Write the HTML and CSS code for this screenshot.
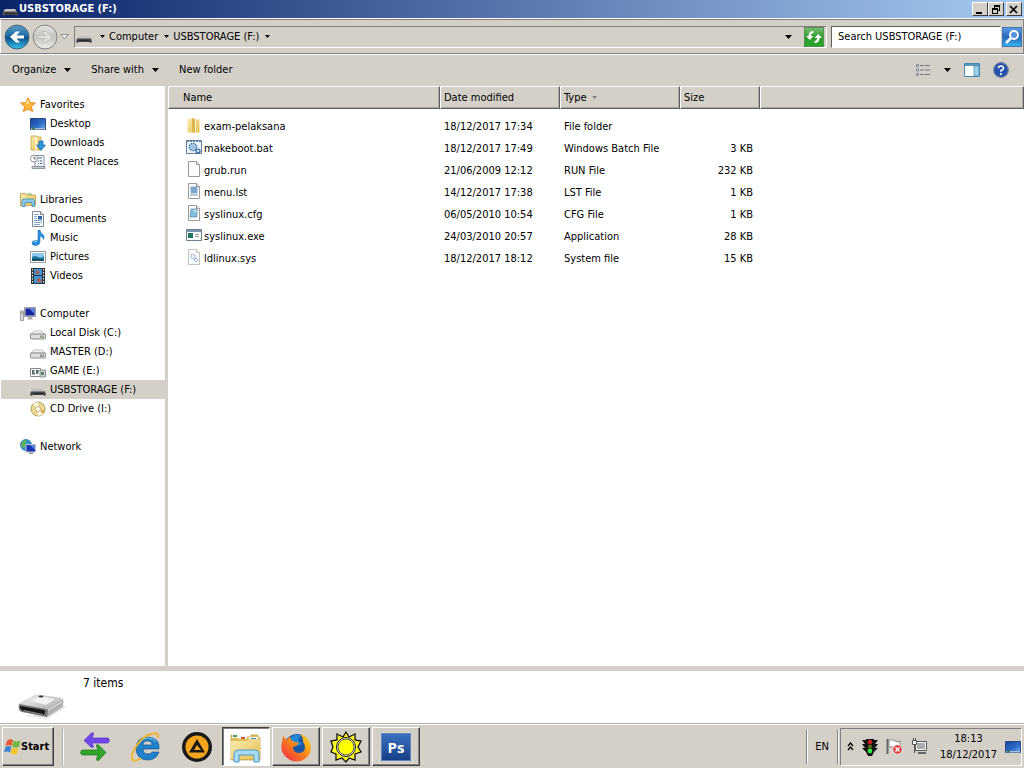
FILE: index.html
```
<!DOCTYPE html>
<html lang="en">
<head>
    <meta charset="utf-8">
    <title>USBSTORAGE (F:)</title>
    <link rel="stylesheet" href="styles.css">
</head>
<body>
    <!-- Icon sprite -->
    <svg class="sprite" aria-hidden="true">
        <defs>
            <linearGradient id="gBlue" x1="0" y1="0" x2="0" y2="1">
                <stop offset="0" stop-color="#5f9fc4"/><stop offset=".48" stop-color="#1769a5"/><stop offset=".52" stop-color="#0c4c87"/><stop offset="1" stop-color="#35c4f0"/>
            </linearGradient>
            <linearGradient id="gGrey" x1="0" y1="0" x2="0" y2="1">
                <stop offset="0" stop-color="#e6e4e0"/><stop offset=".5" stop-color="#c4c2bd"/><stop offset="1" stop-color="#eeece8"/>
            </linearGradient>
            <linearGradient id="gFolder" x1="0" y1="0" x2="1" y2="1">
                <stop offset="0" stop-color="#fbeeb0"/><stop offset="1" stop-color="#e3bd52"/>
            </linearGradient>
            <linearGradient id="gScreen" x1="0" y1="0" x2="1" y2="1">
                <stop offset="0" stop-color="#16439c"/><stop offset=".6" stop-color="#2e6fca"/><stop offset="1" stop-color="#7db5ee"/>
            </linearGradient>
            <linearGradient id="gDrive" x1="0" y1="0" x2="1" y2="1">
                <stop offset="0" stop-color="#fafafa"/><stop offset="1" stop-color="#a8a8a8"/>
            </linearGradient>
            <linearGradient id="gFox" x1="1" y1="0" x2="0" y2="1">
                <stop offset="0" stop-color="#ffe226"/><stop offset=".45" stop-color="#ff8a16"/><stop offset="1" stop-color="#e8204e"/>
            </linearGradient>
        </defs>
        <symbol id="usb" viewBox="0 0 16 16">
            <path d="M3 7h10l2 3H1z" fill="#c2c0bf"/>
            <path d="M1 9.500h14l1 3-1 1.500-2-1H3l-2 1-1-1.500z" fill="#47464b"/>
            <path d="M3 11h10v1H3z" fill="#29282c"/>
        </symbol>
        <symbol id="drive" viewBox="0 0 16 16">
            <path d="M4 6h8l3 3H1z" fill="#f4f4f4" stroke="#aaa" stroke-width=".7"/>
            <path d="M1 9h14q.6 0 .6 1v3q0 1-1 1H1.400q-1 0-1-1v-3q0-1 .6-1z" fill="#dcdcdc" stroke="#777" stroke-width=".8"/>
            <path d="M10 10.500h4v2.500h-4z" fill="#999"/><path d="M12 11h1v1h-1z" fill="#7fe05a"/>
        </symbol>
        <symbol id="game" viewBox="0 0 16 16">
            <path d="M.5 5.500h10v8H.5z" fill="#fff" stroke="#888"/>
            <path d="M2 7h3l-1.500 2.500H5v2H2zM6 7h3l-1 4H6z" fill="#566c6c"/>
            <path d="M10 7h5.500v7H10z" fill="#d4d8d4" stroke="#777" stroke-width=".8"/><path d="M11 9h3v3h-3z" fill="#55886c"/>
        </symbol>
        <symbol id="cd" viewBox="0 0 16 16">
            <circle cx="8" cy="8" r="7" fill="#ead996" stroke="#b49d5c"/>
            <path d="M8 8L3 2.500 8 1zM8 8l5.500 5L8 15z" fill="#fdf9e2"/>
            <circle cx="8" cy="8" r="2.500" fill="#fff" stroke="#b9a566" stroke-width=".8"/>
            <path d="M11 9h3v3h-3z" fill="#c99f2e" opacity=".7"/>
        </symbol>
        <symbol id="star" viewBox="0 0 16 16">
            <path d="M8 .7l2.100 4.900 5.300.4-4 3.500 1.300 5.300L8 12l-4.700 2.800 1.300-5.300-4-3.500 5.300-.4z" fill="#fdb63a" stroke="#e2851c" stroke-width=".9"/>
            <path d="M8 3l1 3.500H5.500z" fill="#fff0b4"/>
        </symbol>
        <symbol id="desktop" viewBox="0 0 16 16">
            <path d="M.5 2.500h15v11H.5z" fill="url(#gScreen)" stroke="#2b4b85"/>
            <path d="M1 12h14v1.500H1z" fill="#a9c0da"/><path d="M2 11.500h3v2H2z" fill="#3c7d4c"/>
        </symbol>
        <symbol id="downloads" viewBox="0 0 16 16">
            <path d="M1 1h6l1 1h3v13H1z" fill="url(#gFolder)" stroke="#c9a548" stroke-width=".8"/>
            <path d="M5 2h2v13H5z" fill="#fff4c5"/>
            <path d="M9 6h4v4h2.500L11 15.500 6.500 10H9z" fill="#2a97dc" stroke="#1267a6" stroke-width=".7"/>
        </symbol>
        <symbol id="recent" viewBox="0 0 16 16">
            <path d="M5 1.500h9v11H5z" fill="#f3f6fb" stroke="#7e8794" stroke-width=".9"/>
            <path d="M2 12.500h13v2H2z" fill="#c4cbd5" stroke="#7e8794" stroke-width=".8"/>
            <path d="M8 4h4M8 7h1m1 0h2M8 9.500h1m1 0h2" stroke="#4b6290"/>
            <circle cx="4" cy="4.500" r="3.500" fill="#fff" stroke="#7e8794" stroke-width=".9"/>
            <path d="M4 2.500v2.300h2" fill="none" stroke="#444" stroke-width=".8"/>
        </symbol>
        <symbol id="libraries" viewBox="0 0 16 16">
            <path d="M.5 1.500h5l1 1.500h9v10.500H.5z" fill="url(#gFolder)" stroke="#bb9c42" stroke-width=".8"/>
            <path d="M7 2h5" stroke="#75b36b"/>
            <path d="M2 14.500V9q0-2 2-2h8.500q2 0 2 2v5.500H12v-4H5v4z" fill="#8bcbee" stroke="#3b8dbd" stroke-width=".8"/>
        </symbol>
        <symbol id="documents" viewBox="0 0 16 16">
            <path d="M2.500.5h8l3 3v12h-11z" fill="#fff" stroke="#7a8794"/>
            <path d="M10.500.5v3h3" fill="#dbe4ee" stroke="#7a8794"/>
            <path d="M4 3.500h5M4 5.500h3m-3 2h3m-3 2h8m-8 2h8m-8 2h6" stroke="#83a7cb"/><path d="M8 5h4v3.500H8z" fill="#2f63a4"/>
        </symbol>
        <symbol id="music" viewBox="0 0 16 16">
            <path d="M8 0h2q.4 3 3 4.500 2 2 .5 5-.3-3-3.500-3.500V12q-.4 3.300-4 3.500-4 0-4-2.600Q2.300 10 8 10.500z" fill="#2890e0" stroke="#1566ae" stroke-width=".5"/>
            <path d="M4 12q1-1 3-.7" stroke="#a8ddff" fill="none"/>
        </symbol>
        <symbol id="pictures" viewBox="0 0 16 16">
            <path d="M.5 2.500h15v11H.5z" fill="#fff" stroke="#999"/>
            <path d="M2 4h12v8H2z" fill="#8bcbf0"/><path d="M2 8q3-2 6 0t6-1v5H2z" fill="#207ba0"/><path d="M2 10q4-1 12 .5V12H2z" fill="#174f67"/>
        </symbol>
        <symbol id="videos" viewBox="0 0 16 16">
            <path d="M1 0h14v16H1z" fill="#303338"/><path d="M4 1h8v6H4zm0 7h8v7H4z" fill="#3f96da"/>
            <path d="M5 4l3-2 2 3-3 1zm2 7l3-1 2 4H7z" fill="#b45d44"/>
            <path d="M2.500 1v15M13.500 1v15" stroke="#eee" stroke-dasharray="1.500 1.500"/>
        </symbol>
        <symbol id="computer" viewBox="0 0 16 16">
            <path d="M.5 5h3v9.500h-3z" fill="#dcdcdc" stroke="#888" stroke-width=".8"/><path d="M1 7h2" stroke="#55a04c"/>
            <path d="M4.500 1.500h11v9h-11z" fill="#cfcfcf" stroke="#888" stroke-width=".8"/>
            <path d="M5.500 2.500h9v7h-9z" fill="#15259f"/><path d="M9 2.500h5.500V8z" fill="#587fe3"/>
            <path d="M8.500 10.500h3l1.500 3H7z" fill="#aaa"/>
        </symbol>
        <symbol id="network" viewBox="0 0 16 16">
            <circle cx="6" cy="6" r="5.500" fill="#2e94d8" stroke="#1766a1" stroke-width=".7"/>
            <path d="M2 3q3-3 5-1L5 5l1 2-3 2-2-2z" fill="#62b44e"/>
            <path d="M6 5.500h9.500V13H6z" fill="#1b35b5" stroke="#bfc4cd"/><path d="M10 6h5v5z" fill="#5b83e4"/><path d="M9 13.500h4V15H9z" fill="#999"/>
        </symbol>
        <symbol id="folder" viewBox="0 0 16 16">
            <path d="M1.500 1.500h6l1 1h5v13h-12z" fill="url(#gFolder)"/><path d="M6 1l3 1v14l-3-1z" fill="#dcb649"/><path d="M9 3h1v12H9z" fill="#fff6cf"/>
        </symbol>
        <symbol id="batch" viewBox="0 0 16 16">
            <path d="M.5 1.500h15v13H.5z" fill="#eff6fc" stroke="#66809b"/><path d="M1 2.500h14" stroke="#4e7ba8" stroke-dasharray="2 1"/>
            <circle cx="7" cy="8" r="3.500" fill="#cbe2f5" stroke="#3b78b4" stroke-width="1.600" stroke-dasharray="1.600 .7"/><circle cx="7" cy="8" r="1.200" fill="#fff" stroke="#3b78b4" stroke-width=".7"/>
            <circle cx="12" cy="12" r="2" fill="#cbe2f5" stroke="#2f68a3" stroke-width="1.200"/>
        </symbol>
        <symbol id="blank" viewBox="0 0 16 16">
            <path d="M2.500.5h8l3 3v12h-11z" fill="#fcfcfc" stroke="#9a9a9a"/><path d="M10.500.5v3h3" fill="#e8e8e8" stroke="#9a9a9a"/>
        </symbol>
        <symbol id="text" viewBox="0 0 16 16">
            <use href="#blank"/><path d="M5 4h6v6H5z" fill="#8dbce5" stroke="#5f86b6" stroke-width=".7"/><path d="M6 6h4M6 8h4M4 12h8" stroke="#5f7ba5" stroke-width=".8"/>
        </symbol>
        <symbol id="config" viewBox="0 0 16 16">
            <use href="#blank"/><path d="M5 4h6v8H4z" fill="#81bfdc" stroke="#5a91ae" stroke-width=".7"/><path d="M7 5h3v3z" fill="#d6f2f6"/>
        </symbol>
        <symbol id="app" viewBox="0 0 16 16">
            <path d="M.5 2.500h15v11H.5z" fill="#fff" stroke="#6b7f90"/><path d="M1 3h14v2H1z" fill="#7c98b0"/>
            <path d="M2 6h5v5H2z" fill="#247465"/><path d="M9 7.500h4m-4 2h4" stroke="#999"/>
        </symbol>
        <symbol id="sys" viewBox="0 0 16 16">
            <g opacity=".6"><use href="#blank"/><circle cx="7" cy="7.500" r="2.300" fill="#e5eff8" stroke="#6792b8" stroke-width="1.300" stroke-dasharray="1.400 .5"/><circle cx="10" cy="11" r="1.600" fill="#e5eff8" stroke="#6792b8"/></g>
        </symbol>
        <symbol id="caret" viewBox="0 0 7 4"><path d="M0 0h7L3.500 4z" fill="currentColor"/></symbol>
    </svg>

    <header class="titlebar">
        <svg class="icon"><use href="#usb"/></svg>
        <h1>USBSTORAGE (F:)</h1>
        <div class="window-buttons">
            <button aria-label="Minimize"><svg width="10" height="9"><path d="M1 7h6v2H1z"/></svg></button>
            <button aria-label="Restore"><svg width="10" height="9"><path d="M3 0h6v6H7V5h1V2H4v1H3zM1 3h6v6H1zm1 2v3h4V5z" fill-rule="evenodd"/></svg></button>
            <button class="close" aria-label="Close"><svg width="10" height="9"><path d="M1 1l7 7M8 1L1 8" stroke="#000" stroke-width="1.700"/></svg></button>
        </div>
    </header>

    <nav class="navbar" aria-label="Address">
        <div class="history">
            <button aria-label="Back">
                <svg width="26" height="26" viewBox="0 0 26 26"><circle cx="13" cy="13" r="12" fill="url(#gBlue)" stroke="#48637b"/><path d="M20 11.500h-7.500l3.500-4h-4L6 13l6 5.500h4l-3.500-4H20z" fill="#fff"/></svg>
            </button>
            <button aria-label="Forward">
                <svg width="26" height="26" viewBox="0 0 26 26"><circle cx="13" cy="13" r="12" fill="url(#gGrey)" stroke="#85837f"/><path d="M6 11.500h7.500l-3.500-4h4l6 5.500-6 5.500h-4l3.500-4H6z" fill="#deddd9" stroke="#bbb9b4" stroke-width=".6"/></svg>
            </button>
            <button aria-label="Recent pages"><svg width="9" height="6"><path d="M.7.5h7.600L4.500 5z" fill="#eee" stroke="#777" stroke-width=".8"/></svg></button>
        </div>
        <div class="address">
            <svg class="icon"><use href="#usb"/></svg>
            <button class="crumb" aria-label="Locations"><svg class="caret small"><use href="#caret"/></svg></button>
            <button class="crumb">Computer <svg class="caret small"><use href="#caret"/></svg></button>
            <button class="crumb">USBSTORAGE (F:) <svg class="caret small"><use href="#caret"/></svg></button>
            <button class="previous" aria-label="Previous locations"><svg class="caret"><use href="#caret"/></svg></button>
            <button class="refresh" aria-label="Refresh"><svg width="18" height="18" viewBox="0 0 18 18"><path d="M8.500 3v2Q6 5 6 8h2.500l-3.700 4L1 8h2.500q0-5 5-5zM9.500 15v-2q2.500 0 2.500-3H9.500l3.700-4L17 10h-2.500q0 5-5 5z" fill="#fff"/></svg></button>
        </div>
        <form class="search">
            <input type="text" aria-label="Search" value="Search USBSTORAGE (F:)">
            <button type="button" aria-label="Search"><svg width="18" height="18" viewBox="0 0 18 18"><circle cx="11" cy="7" r="4" fill="#5591dd" stroke="#fff" stroke-width="2"/><path d="M8 10l-5 5" stroke="#fff" stroke-width="2.500"/></svg></button>
        </form>
    </nav>

    <div class="toolbar">
        <button>Organize <svg class="caret"><use href="#caret"/></svg></button>
        <button>Share with <svg class="caret"><use href="#caret"/></svg></button>
        <button>New folder</button>
        <div class="view-tools">
            <button class="view" aria-label="Change view">
                <svg width="16" height="14" viewBox="0 0 16 14"><path d="M1.500 1.500h2v2h-2zm0 4.500h2v2h-2zm0 4.500h2v2h-2z" fill="#fff" stroke="#73839b"/><path d="M5 2.500h4m1 0h5M5 7h4m1 0h5M5 11.500h4m1 0h5" stroke="#74767c"/></svg>
                <svg class="caret"><use href="#caret"/></svg>
            </button>
            <button aria-label="Preview pane"><svg width="16" height="14"><path d="M.5.5h15v13H.5z" fill="#fff" stroke="#4887ad"/><path d="M1 1h14v2H1z" fill="#5999bd"/><path d="M10 3h5v10h-5z" fill="#9bd2e8" stroke="#4887ad" stroke-width=".7"/></svg></button>
            <button aria-label="Help"><svg width="16" height="16"><circle cx="8" cy="8" r="7.300" fill="#254fae" stroke="#6f7f9e" stroke-width="1.300"/><path d="M5.500 6.200Q5.500 4 8 4t2.500 2.200Q10.500 7.500 8 8.500v1.300" fill="none" stroke="#fff" stroke-width="1.700"/><circle cx="8" cy="12" r="1.100" fill="#fff"/></svg></button>
        </div>
    </div>

    <main class="explorer">
        <nav class="sidebar" aria-label="Folders">
            <ul>
                <li><a href="#"><svg class="icon"><use href="#star"/></svg>Favorites</a>
                    <ul>
                        <li><a href="#"><svg class="icon"><use href="#desktop"/></svg>Desktop</a></li>
                        <li><a href="#"><svg class="icon"><use href="#downloads"/></svg>Downloads</a></li>
                        <li><a href="#"><svg class="icon"><use href="#recent"/></svg>Recent Places</a></li>
                    </ul>
                </li>
                <li><a href="#"><svg class="icon"><use href="#libraries"/></svg>Libraries</a>
                    <ul>
                        <li><a href="#"><svg class="icon"><use href="#documents"/></svg>Documents</a></li>
                        <li><a href="#"><svg class="icon"><use href="#music"/></svg>Music</a></li>
                        <li><a href="#"><svg class="icon"><use href="#pictures"/></svg>Pictures</a></li>
                        <li><a href="#"><svg class="icon"><use href="#videos"/></svg>Videos</a></li>
                    </ul>
                </li>
                <li><a href="#"><svg class="icon"><use href="#computer"/></svg>Computer</a>
                    <ul>
                        <li><a href="#"><svg class="icon"><use href="#drive"/></svg>Local Disk (C:)</a></li>
                        <li><a href="#"><svg class="icon"><use href="#drive"/></svg>MASTER (D:)</a></li>
                        <li><a href="#"><svg class="icon"><use href="#game"/></svg>GAME (E:)</a></li>
                        <li><a href="#" class="selected"><svg class="icon"><use href="#usb"/></svg>USBSTORAGE (F:)</a></li>
                        <li><a href="#"><svg class="icon"><use href="#cd"/></svg>CD Drive (I:)</a></li>
                    </ul>
                </li>
                <li><a href="#"><svg class="icon"><use href="#network"/></svg>Network</a></li>
            </ul>
        </nav>

        <section class="files">
            <table>
                <colgroup>
                    <col class="col-name"><col class="col-date"><col class="col-type"><col class="col-size"><col>
                </colgroup>
                <thead>
                    <tr><th>Name</th><th>Date modified</th><th>Type <svg class="caret sort"><use href="#caret"/></svg></th><th>Size</th><th></th></tr>
                </thead>
                <tbody>
                    <tr><td><svg class="icon"><use href="#folder"/></svg>exam-pelaksana</td><td>18/12/2017 17:34</td><td>File folder</td><td></td><td></td></tr>
                    <tr><td><svg class="icon"><use href="#batch"/></svg>makeboot.bat</td><td>18/12/2017 17:49</td><td>Windows Batch File</td><td>3 KB</td><td></td></tr>
                    <tr><td><svg class="icon"><use href="#blank"/></svg>grub.run</td><td>21/06/2009 12:12</td><td>RUN File</td><td>232 KB</td><td></td></tr>
                    <tr><td><svg class="icon"><use href="#text"/></svg>menu.lst</td><td>14/12/2017 17:38</td><td>LST File</td><td>1 KB</td><td></td></tr>
                    <tr><td><svg class="icon"><use href="#config"/></svg>syslinux.cfg</td><td>06/05/2010 10:54</td><td>CFG File</td><td>1 KB</td><td></td></tr>
                    <tr><td><svg class="icon"><use href="#app"/></svg>syslinux.exe</td><td>24/03/2010 20:57</td><td>Application</td><td>28 KB</td><td></td></tr>
                    <tr><td><svg class="icon"><use href="#sys"/></svg>ldlinux.sys</td><td>18/12/2017 18:12</td><td>System file</td><td>15 KB</td><td></td></tr>
                </tbody>
            </table>
        </section>
    </main>

    <section class="details">
        <svg width="50" height="28" viewBox="0 0 50 28">
            <path d="M6 22l24 4 19-12-3-2-16 10z" fill="#e6e6e6"/>
            <path d="M2 11L17 3q2-1 4-1l22 3q4 1 3 3L30 17z" fill="url(#gDrive)" stroke="#bbb" stroke-width=".6"/>
            <path d="M15 8l8-4 15 2-9 6z" fill="#fafafa" opacity=".8"/><ellipse cx="24" cy="3.500" rx="2.500" ry="1" fill="#333"/>
            <path d="M28 17l17-10q1.500 0 1.500 2l-1 5L30 24z" fill="#b0b0b0"/><path d="M31 17l14-8" stroke="#eee"/>
            <path d="M2 11l27 5q2 0 2 2l-1 6L5 19q-3-1-3.500-4z" fill="#777"/>
            <path d="M3 13l24 4q1 0 1 2l-1 3L6 18q-2-1-3-3z" fill="#151515"/><path d="M7 17l19 4v1L6 18z" fill="#888"/>
        </svg>
        <p>7 items</p>
    </section>

    <footer class="taskbar">
        <button class="start">
            <svg width="17" height="17" viewBox="0 0 17 17"><path d="M3 3q3-3 6-1L7.500 8Q5 6 1.500 8z" fill="#e9542b"/><path d="M9.500 2.500q3 2 7 0L15 9Q11 10.500 8 8.500z" fill="#72b744"/><path d="M1.500 9q3-2 6 0L6 14.500q-3-2-6 0z" fill="#3d83d4"/><path d="M8 9.500q3 2 6.500.5L13 16q-3 1.500-6.500-.8z" fill="#f6c52d"/></svg>
            Start
        </button>
        <div class="quick-launch">
            <button aria-label="Transfer">
                <svg width="32" height="32" viewBox="0 0 32 32"><path d="M5 9.500L13 1.500q2 0 1.500 2L13 7h16q3 2.500 0 5H13l1.500 3.500q-.5 1.500-2 1z" fill="#7048ee" stroke="#5631c0" stroke-width=".7"/><path d="M27 21.500l-8-8q-2 0-1.500 2L19 19H3q-3 2.500 0 5h16l-1.500 4q0 2 2 1.500z" fill="#33a52c" stroke="#22741d" stroke-width=".7"/></svg>
            </button>
            <button aria-label="Internet Explorer">
                <svg width="32" height="32" viewBox="0 0 32 32"><path d="M29 18H13q0 5 5 5 3 0 4.500-2H29q-3 8-11 8Q7 29 6 18 6 6 18 6q12 1 11 12zM13 14h9q0-4-4.500-4T13 14z" fill="#2182ca" stroke="#125596" stroke-width=".7" fill-rule="evenodd"/><path d="M9 12q3-5 9-5 5 0 8 4" fill="none" stroke="#8bcff5"/><path d="M28 7q1-6-5-4.500Q14 4 7 14-1 26 3 29q2 2 8-2" fill="none" stroke="#efb62d" stroke-width="2"/></svg>
            </button>
            <button aria-label="AIMP">
                <svg width="32" height="32" viewBox="0 0 32 32"><circle cx="16" cy="16" r="15" fill="#1b1a1a"/><circle cx="16" cy="16" r="11.500" fill="#f4a71d"/><path d="M16 8l8 13.500H8zM16 14l-3 5h7z" fill="#1b1a1a" fill-rule="evenodd"/></svg>
            </button>
        </div>
        <div class="tasks">
            <button class="active" aria-label="Windows Explorer">
                <svg width="34" height="34" viewBox="0 0 34 34"><path d="M2 5h6l2 2h12V5h7v3h2v22H2z" fill="#e1bd5b" stroke="#b8953c" stroke-width=".7"/><path d="M3 4h7v4H3zM10 6h8v3h-8zM20 7h9v4h-9z" fill="#fff"/><path d="M4 5h4v2H4z" fill="#45a34a"/><path d="M12 7h4v2h-4z" fill="#d95237"/><path d="M22 8h5v2h-5z" fill="#3c87c7"/><path d="M2 11h16l2-2h11v20H2z" fill="url(#gFolder)"/><path d="M5 32V24q0-4 4-4h17q4 0 4 4v8h-5v-7H10v7z" fill="#a8daf3" stroke="#4d9fca"/></svg>
            </button>
            <button aria-label="Firefox">
                <svg width="32" height="32" viewBox="0 0 32 32"><circle cx="17" cy="16" r="13" fill="#1957a5"/><path d="M10 8q4-6 11-4l-3 5 4 4-5 2-4-3z" fill="#2389d7"/><path d="M3 5l4 4 3-4q0 5 5 6l4 1-3 3-3 1q0 5 5 6 7 0 7-6 0-3-2-5 1-4-3-8 7 2 10 9 3 9-4 15-7 6-16 2Q-1 23 2 11z" fill="url(#gFox)"/></svg>
            </button>
            <button aria-label="Sun">
                <svg width="32" height="32" viewBox="0 0 32 32"><path d="M16 1l3 5 6-3v6l6 1-3 6 3 5-6 2v6l-6-2-3 4-4-4-6 2v-6l-5-2 2-5-2-6 6-1V3l6 3z" fill="#ffff20" stroke="#111" stroke-width="1.300"/><circle cx="16" cy="16" r="9.500" fill="#fff" stroke="#111"/><circle cx="16" cy="16" r="8" fill="#ffff00" stroke="#333" stroke-width=".8"/></svg>
            </button>
            <button aria-label="Photoshop"><span class="ps">Ps</span></button>
        </div>
        <button class="language">EN</button>
        <div class="tray">
            <button aria-label="Show hidden icons"><svg width="7" height="9"><path d="M1 4l2.500-3L6 4M1 8l2.500-3L6 8" fill="none" stroke="#000" stroke-width="1.300"/></svg></button>
            <button aria-label="Traffic monitor"><svg width="16" height="18"><path d="M4 1h8v1h4l-3 4h3l-3 4h3l-4 4-2 4H6l-2-4-4-4h3L0 6h3L0 2h4z" fill="#111"/><circle cx="8" cy="4" r="2.200" fill="#d52020"/><circle cx="8" cy="8.500" r="2" fill="#6e6416"/><circle cx="8" cy="13" r="2.400" fill="#32e843"/></svg></button>
            <button aria-label="Action Center"><svg width="17" height="17"><path d="M1.500 1v15" stroke="#666" stroke-width="2"/><path d="M3 2q4-1 6 1t5 0v7q-4 2-6 0T3 9z" fill="#fff" stroke="#888"/><circle cx="11.500" cy="11.500" r="4.700" fill="#dc3d3d" stroke="#fff" stroke-width=".7"/><path d="M9.500 9.500l4 4m0-4l-4 4" stroke="#fff" stroke-width="1.500"/></svg></button>
            <button aria-label="Network status"><svg width="17" height="17"><path d="M4.500 3.500h11v9h-11z" fill="#aaa" stroke="#555"/><path d="M5.500 4.500h9v7h-9z" fill="none" stroke="#fff"/><path d="M7 14h8v2H7z" fill="#666"/><path d="M1.500 2.500h4v4h-4zM3.500 7v8M2.500 0v2m2-2v2" fill="#fff" stroke="#555"/></svg></button>
            <time datetime="2017-12-18T18:13">18:13<br>18/12/2017</time>
            <button aria-label="Show desktop"><svg class="icon"><use href="#desktop"/></svg></button>
        </div>
    </footer>
</body>
</html>
```
FILE: styles.css
```
* {
    box-sizing: border-box;
}
body {
    margin: 0;
    min-height: 100vh;
    display: flex;
    flex-direction: column;
    background: #d4d0c8;
    color: #000;
    font: 11px/14px Tahoma, "DejaVu Sans Condensed", sans-serif;
}
button, input {
    font: inherit;
    color: inherit;
}
button {
    display: flex;
    align-items: center;
    padding: 0;
    border: 0;
    background: none;
    white-space: nowrap;
}
svg {
    display: block;
    flex: none;
}
.sprite {
    position: absolute;
    width: 0;
    height: 0;
}
.icon {
    width: 16px;
    height: 16px;
}
.caret {
    width: 7px;
    height: 4px;
}
.caret.small {
    width: 5px;
    height: 3px;
}

/* Title bar */
.titlebar {
    display: flex;
    align-items: center;
    height: 18px;
    padding: 0 2px;
    background: linear-gradient(to right, #0a246a, #a6caf0);
    color: #fff;
}
.titlebar h1 {
    margin: 0 0 0 1px;
    font-size: 11px;
}
.titlebar .icon {
    align-self: flex-end;
}
.window-buttons {
    display: flex;
    margin-left: auto;
}
.window-buttons button {
    justify-content: center;
    width: 16px;
    height: 14px;
    border: 1px solid;
    border-color: #fff #404040 #404040 #fff;
    background: #d4d0c8;
}
.window-buttons .close {
    margin-left: 2px;
}

/* Address row */
.navbar {
    display: flex;
    align-items: center;
    height: 35px;
    margin-top: 1px;
    padding: 0 1px 0 3px;
    border: 1px solid #808080;
    border-left-color: #fff;
    box-shadow: 0 -1px #fff, 0 1px #fff;
}
.history {
    display: flex;
    align-items: center;
    gap: 2px;
    width: 70px;
}
.address {
    display: flex;
    flex: 1;
    align-items: center;
    height: 22px;
    padding: 0 2px 0 1px;
    border: 1px solid;
    border-color: #808080 #fff #fff #808080;
}
.crumb {
    gap: 6px;
    margin-left: 4px;
}
.crumb:first-of-type {
    margin-left: 8px;
}
.previous {
    margin-left: auto;
}
.refresh {
    justify-content: center;
    width: 20px;
    height: 20px;
    margin-left: 12px;
    border: 1px solid #569052;
    background: linear-gradient(#78bd70, #2c9c2c 50%, #27a72b);
}
.search {
    display: flex;
    align-items: center;
    gap: 1px;
    margin-left: 4px;
}
.search input {
    width: 170px;
    height: 22px;
    padding: 0 6px;
    border: 1px solid;
    border-color: #606060 #fff #fff #606060;
    background: #fff;
}
.search button {
    justify-content: center;
    width: 20px;
    height: 20px;
    border: 1px solid #4375b5;
    background: linear-gradient(#5d9be2, #2765bf 50%, #37b3ea);
}

/* Command bar */
.toolbar {
    display: flex;
    align-items: center;
    gap: 20px;
    height: 32px;
    padding: 0 15px 0 12px;
}
.toolbar button {
    gap: 8px;
}
.view-tools {
    display: flex;
    align-items: center;
    gap: 13px;
    margin-left: auto;
}
.toolbar .view {
    gap: 13px;
}

/* Folder tree and file list */
.explorer {
    display: flex;
    flex: 1;
    background: #fff;
}
.sidebar {
    flex: none;
    width: 168px;
    padding: 9px 0 0 1px;
    border-right: 3px solid #d4d0c8;
}
.sidebar ul {
    margin: 0;
    padding: 0;
    list-style: none;
}
.sidebar > ul > li {
    margin-bottom: 19px;
}
.sidebar a {
    display: flex;
    align-items: center;
    gap: 4px;
    height: 19px;
    padding-left: 19px;
    color: #000;
    text-decoration: none;
}
.sidebar ul ul a {
    padding-left: 29px;
}
.sidebar .selected {
    background: #d4d0c8;
}
.files {
    flex: 1;
}
.files table {
    width: 100%;
    table-layout: fixed;
    border-collapse: separate;
    border-spacing: 0;
}
.col-name {
    width: 272px;
}
.col-date, .col-type {
    width: 120px;
}
.col-size {
    width: 80px;
}
.files th {
    height: 23px;
    padding: 0 3px;
    border: 1px solid;
    border-color: #fff #606060 #606060 #fff;
    background: #d4d0c8;
    box-shadow: inset -1px -1px #aaa69f;
    font-weight: normal;
    text-align: left;
}
.files th:first-child {
    padding-left: 14px;
}
.files tbody::before {
    content: "";
    display: block;
    height: 7px;
}
.files td {
    height: 22px;
    padding: 0 4px;
    line-height: 22px;
    white-space: nowrap;
}
.files td:first-child {
    padding-left: 18px;
}
.files td:nth-child(4) {
    padding-right: 7px;
    text-align: right;
}
.files td .icon {
    display: inline-block;
    margin-right: 2px;
    vertical-align: -3px;
}
.sort {
    display: inline-block;
    width: 5px;
    height: 3px;
    margin-left: 2px;
    color: #808080;
    vertical-align: middle;
}

/* Details pane */
.details {
    display: flex;
    gap: 16px;
    height: 58px;
    padding: 5px 17px 0;
    border-top: 5px solid #d4d0c8;
    border-bottom: 1px solid #d4d0c8;
    background: #fff;
    font-size: 12px;
}
.details svg {
    margin-top: 17px;
}
.details p {
    margin: 0;
}

/* Taskbar */
.taskbar {
    display: flex;
    align-items: center;
    height: 44px;
    padding: 0 2px;
    border-top: 1px solid #fff;
    box-shadow: 0 -1px #b5b1aa;
}
.start, .tasks button {
    height: 39px;
    border: 1px solid;
    border-color: #fff #404040 #404040 #fff;
    box-shadow: inset -1px -1px #808080;
}
.start {
    width: 52px;
    padding-left: 1px;
    font-weight: bold;
}
.quick-launch {
    display: flex;
    align-items: center;
    gap: 19px;
    height: 36px;
    margin-left: 8px;
    padding: 0 9px 0 15px;
    border-left: 2px groove #fff;
}
.tasks {
    display: flex;
    gap: 2px;
}
.tasks button {
    justify-content: center;
    width: 48px;
}
.tasks .active {
    border-color: #404040 #fff #fff #404040;
    background: #fff;
    box-shadow: inset 1px 1px #808080;
}
.ps {
    width: 30px;
    border: 1px solid #5e85be;
    background: linear-gradient(#3a70c0, #173f86);
    color: #fff;
    font: bold 15px/26px "Open Sans", sans-serif;
    text-align: center;
}
.language {
    height: 34px;
    margin-left: auto;
    padding: 0 8px;
    border: solid #808080;
    border-width: 0 1px;
    box-shadow: 1px 0 #fff, inset 1px 0 #fff;
}
.tray {
    display: flex;
    align-items: center;
    gap: 8px;
    height: 38px;
    margin-left: 2px;
    padding-left: 6px;
    border: 1px solid;
    border-color: #808080 #fff #fff #808080;
}
.tray time {
    margin-left: 4px;
    line-height: 16px;
    text-align: center;
}
```
